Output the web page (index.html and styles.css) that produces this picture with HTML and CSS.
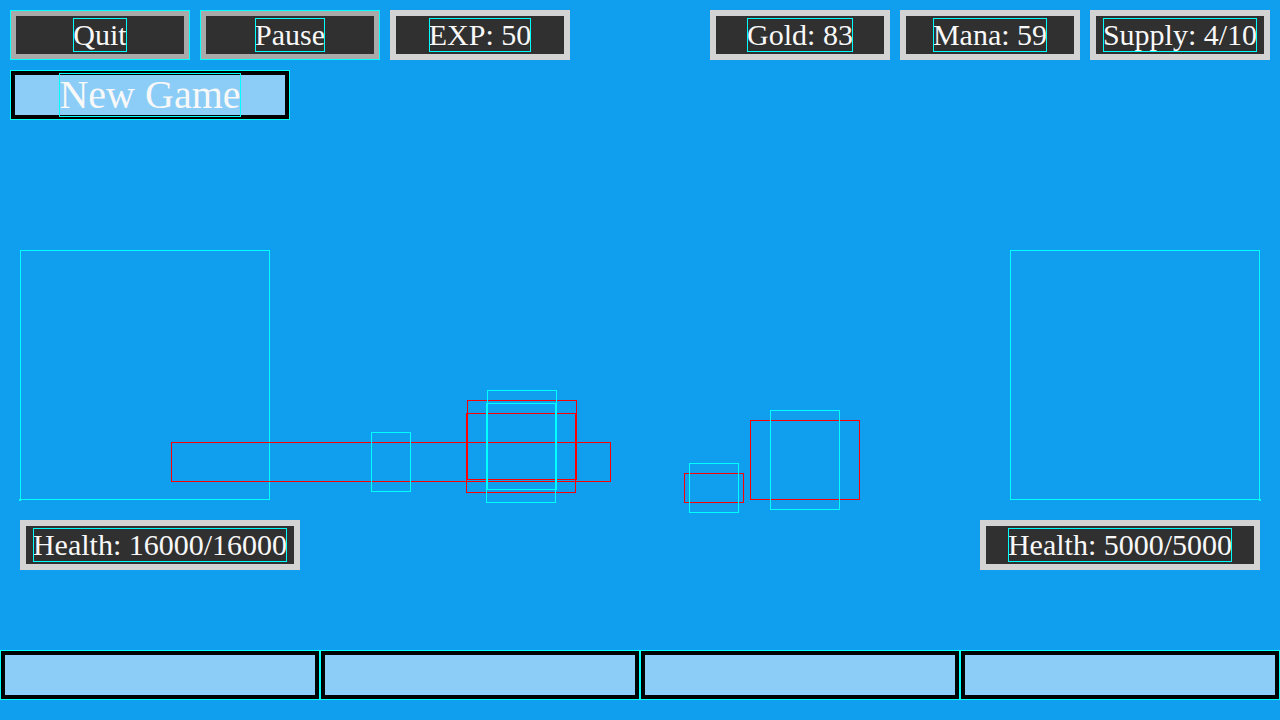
FILE: index.html
```html
<!DOCTYPE html>
<html>
<head>
<meta charset="utf-8">
<title>Game</title>
<link rel="stylesheet" href="styles.css">
</head>
<body>
<div class="screen">
  <div class="topbar">
    <div class="group">
      <div class="panel btn"><span class="label">Quit</span></div>
      <div class="panel btn"><span class="label">Pause</span></div>
      <div class="panel"><span class="label">EXP: 50</span></div>
    </div>
    <div class="group">
      <div class="panel"><span class="label">Gold: 83</span></div>
      <div class="panel"><span class="label">Mana: 59</span></div>
      <div class="panel"><span class="label">Supply: 4/10</span></div>
    </div>
  </div>
  <div class="menu-row">
    <div class="new-game"><span class="label big">New Game</span></div>
  </div>
  <div class="arena">
    <div class="body cyan base base-left"></div>
    <div class="body cyan base base-right"></div>
    <div class="body red" style="left:171px;top:322px;width:440px;height:40px"></div>
    <div class="body cyan" style="left:371px;top:312px;width:40px;height:60px"></div>
    <div class="body red" style="left:467px;top:280px;width:110px;height:80px"></div>
    <div class="body red" style="left:466px;top:293px;width:110px;height:80px"></div>
    <div class="body cyan" style="left:487px;top:270px;width:70px;height:100px"></div>
    <div class="body cyan" style="left:486px;top:283px;width:70px;height:100px"></div>
    <div class="body red" style="left:684px;top:353px;width:60px;height:30px"></div>
    <div class="body cyan" style="left:689px;top:343px;width:50px;height:50px"></div>
    <div class="body red" style="left:750px;top:300px;width:110px;height:80px"></div>
    <div class="body cyan" style="left:770px;top:290px;width:70px;height:100px"></div>
  </div>
  <div class="health-row">
    <div class="panel wide"><span class="label">Health: 16000/16000</span></div>
    <div class="panel wide"><span class="label">Health: 5000/5000</span></div>
  </div>
  <div class="cards">
    <div class="card"></div>
    <div class="card"></div>
    <div class="card"></div>
    <div class="card"></div>
  </div>
</div>
</body>
</html>
```

FILE: styles.css
```css
html, body {
  margin: 0;
  padding: 0;
}

body {
  background: #0f9fee;
  font-family: "Liberation Serif", "Times New Roman", serif;
}

.screen {
  width: 1280px;
  height: 720px;
  display: flex;
  flex-direction: column;
  overflow: hidden;
}

.topbar {
  display: flex;
  justify-content: space-between;
  margin: 10px 10px 0;
}

.group {
  display: flex;
  gap: 10px;
}

.panel {
  box-sizing: border-box;
  width: 180px;
  height: 50px;
  border: 6px solid #d3d3d3;
  background: #303030;
  display: flex;
  align-items: center;
  justify-content: center;
  color: #f8f8f8;
  font-size: 30px;
}

.panel.btn {
  border-color: #a9a9a9;
  outline: 1px solid #00ffff;
  outline-offset: -1px;
}

.panel.wide {
  width: 280px;
}

.label {
  display: inline-block;
  line-height: 34px;
  white-space: nowrap;
  outline: 1px solid #00ffff;
  outline-offset: -1px;
}

.label.big {
  line-height: 44px;
}

.menu-row {
  display: flex;
  margin: 10px 0 0 10px;
}

.new-game {
  box-sizing: border-box;
  width: 280px;
  height: 50px;
  border: 5px solid #000;
  background: #8bcdf6;
  outline: 1px solid #00ffff;
  outline-offset: -1px;
  display: flex;
  align-items: center;
  justify-content: center;
  color: #f8f8f8;
  font-size: 40px;
}

.arena {
  position: relative;
  height: 400px;
}

.body {
  position: absolute;
  box-sizing: border-box;
  border: 1px solid;
}

.body.cyan {
  border-color: #00ffff;
}

.body.red {
  border-color: #ff0000;
}

.base {
  top: 130px;
  width: 250px;
  height: 250px;
}

.base-left {
  left: 20px;
}

.base-right {
  left: 1010px;
}

.base::after {
  content: "";
  position: absolute;
  width: 2px;
  height: 2px;
  background: #00ffff;
  bottom: -2px;
}

.base-left::after {
  left: -2px;
}

.base-right::after {
  right: -2px;
}

.health-row {
  display: flex;
  justify-content: space-between;
  padding: 0 20px;
}

.cards {
  display: grid;
  grid-template-columns: repeat(4, 1fr);
  margin-top: 80px;
  height: 50px;
}

.card {
  box-sizing: border-box;
  border: 5px solid #000;
  background: #8bcdf6;
  outline: 1px solid #00ffff;
  outline-offset: -1px;
}
```
